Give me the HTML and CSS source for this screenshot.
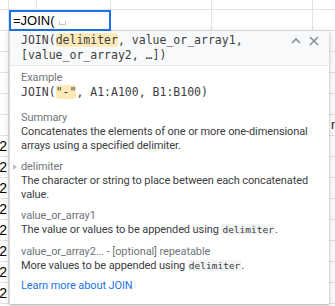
FILE: index.html
```html
<!DOCTYPE html>
<html lang="en">
<head>
    <meta charset="UTF-8">
    <meta name="viewport" content="width=device-width, initial-scale=1.0">
    <title>JOIN formula help</title>
    <link rel="stylesheet" href="styles.css">
</head>
<body>
    <div class="sheet">
        <div class="row row-top">
            <div class="cell c0"></div><div class="cell c1a"></div><div class="cell c1b"></div><div class="cell c2"></div><div class="cell c3"></div><div class="cell c4"></div>
        </div>
        <div class="row">
            <div class="cell c0"></div>
            <div class="cell c1 active">=JOIN(<span class="space-mark"></span></div>
            <div class="cell c2"></div><div class="cell c3"></div><div class="cell c4"></div>
        </div>
        <div class="row"><div class="cell c0"></div><div class="cell c1"></div><div class="cell c2"></div><div class="cell c3"></div><div class="cell c4"></div></div>
        <div class="row"><div class="cell c0"></div><div class="cell c1"></div><div class="cell c2"></div><div class="cell c3"></div><div class="cell c4"></div></div>
        <div class="row"><div class="cell c0"></div><div class="cell c1"></div><div class="cell c2"></div><div class="cell c3"></div><div class="cell c4"></div></div>
        <div class="row"><div class="cell c0"></div><div class="cell c1"></div><div class="cell c2"></div><div class="cell c3"></div><div class="cell c4"></div></div>
        <div class="row"><div class="cell c0"></div><div class="cell c1"></div><div class="cell c2"></div><div class="cell c3"></div><div class="cell c4 overflow">n</div></div>
        <div class="row"><div class="cell c0 num">2</div><div class="cell c1"></div><div class="cell c2"></div><div class="cell c3"></div><div class="cell c4"></div></div>
        <div class="row"><div class="cell c0 num">2</div><div class="cell c1"></div><div class="cell c2"></div><div class="cell c3"></div><div class="cell c4"></div></div>
        <div class="row"><div class="cell c0 num">2</div><div class="cell c1"></div><div class="cell c2"></div><div class="cell c3"></div><div class="cell c4"></div></div>
        <div class="row"><div class="cell c0 num">2</div><div class="cell c1"></div><div class="cell c2"></div><div class="cell c3"></div><div class="cell c4"></div></div>
        <div class="row"><div class="cell c0 num">2</div><div class="cell c1"></div><div class="cell c2"></div><div class="cell c3"></div><div class="cell c4"></div></div>
        <div class="row"><div class="cell c0 num">2</div><div class="cell c1"></div><div class="cell c2"></div><div class="cell c3"></div><div class="cell c4"></div></div>
        <div class="row"><div class="cell c0 num">2</div><div class="cell c1"></div><div class="cell c2"></div><div class="cell c3"></div><div class="cell c4"></div></div>
        <div class="row"><div class="cell c0 num">2</div><div class="cell c1"></div><div class="cell c2"></div><div class="cell c3"></div><div class="cell c4"></div></div>
    </div>

    <div class="formula-help">
        <div class="help-header">
            <div class="signature">JOIN(<span class="hl">delimiter</span>, value_or_array1, [value_or_array2, …])</div>
            <div class="header-icons">
                <svg width="12" height="12" viewBox="0 0 12 12"><polyline points="2,8 6,4 10,8" fill="none" stroke="#8a8f94" stroke-width="1.6"/></svg>
                <svg width="12" height="12" viewBox="0 0 12 12"><path d="M2 2 L10 10 M10 2 L2 10" stroke="#8a8f94" stroke-width="1.6"/></svg>
            </div>
        </div>
        <div class="help-body">
            <div class="section">
                <div class="label">Example</div>
                <div class="code">JOIN(<span class="hl">"-"</span>, A1:A100, B1:B100)</div>
            </div>
            <div class="section">
                <div class="label">Summary</div>
                <div class="text">Concatenates the elements of one or more one-dimensional arrays using a specified delimiter.</div>
            </div>
            <div class="arg current">
                <div class="label">delimiter</div>
                <div class="text">The character or string to place between each concatenated value.</div>
            </div>
            <div class="arg">
                <div class="label">value_or_array1</div>
                <div class="text">The value or values to be appended using <code>delimiter</code>.</div>
            </div>
            <div class="arg">
                <div class="label">value_or_array2... - [optional] repeatable</div>
                <div class="text">More values to be appended using <code>delimiter</code>.</div>
            </div>
            <a class="learn-more" href="#">Learn more about JOIN</a>
        </div>
    </div>
</body>
</html>
```

FILE: styles.css
```css
body {
    margin: 0;
    width: 335px;
    height: 306px;
    overflow: hidden;
    background: #fff;
    font-family: 'Liberation Sans', Arial, sans-serif;
    position: relative;
}

.sheet {
    display: flex;
    flex-direction: column;
    margin-top: -11px;
}

.row {
    display: flex;
    height: 21px;
}

.cell {
    box-sizing: border-box;
    height: 21px;
    border-right: 1px solid #e2e3e3;
    border-bottom: 1px solid #e2e3e3;
    font-size: 13px;
    line-height: 20px;
    color: #000;
    white-space: nowrap;
    overflow: hidden;
}

.c0 { width: 9px; }
.c1 { width: 102px; padding-left: 4px; }
.c1a { width: 28px; }
.c1b { width: 74px; }
.c2 { width: 101px; }
.c3 { width: 101px; }
.c4 { flex: 1; border-right: none; }

.num {
    text-align: right;
    padding-right: 1px;
    font-size: 14px;
    overflow: visible;
    direction: rtl;
}

.overflow {
    padding-left: 18px;
    color: #222;
}

.active {
    border: none;
    box-shadow: inset 0 0 0 2px #1a73e8;
    position: relative;
    z-index: 1;
    padding-top: 1px;
}

.space-mark {
    display: inline-block;
    width: 5px;
    height: 3px;
    margin-left: 4px;
    border: 1px solid #c4c7c5;
    border-top: none;
}

.formula-help {
    position: absolute;
    left: 10px;
    top: 31px;
    width: 319px;
    background: #fff;
    box-shadow: 0 1px 2px rgba(60, 64, 67, 0.3), 0 2px 6px 2px rgba(60, 64, 67, 0.15);
    z-index: 2;
}

.help-header {
    display: flex;
    justify-content: space-between;
    background: #f8f9fa;
    border-bottom: 1px solid #e8eaed;
    padding: 2px 9px 2px 11px;
}

.signature {
    font-family: 'DejaVu Sans Mono', 'Liberation Mono', monospace;
    font-size: 11.5px;
    line-height: 15px;
    color: #3c4043;
    width: 250px;
}

.hl {
    background: #fde9b5;
    border-radius: 3px;
}

.header-icons {
    display: flex;
    gap: 6px;
    padding-top: 2px;
}

.help-body {
    padding: 5px 6px 11px 11px;
    font-family: Roboto, Arial, sans-serif;
    font-size: 11px;
    letter-spacing: -0.1px;
    line-height: 14px;
    color: #3c4043;
}

.label {
    color: #70757a;
}

.code {
    font-family: 'DejaVu Sans Mono', 'Liberation Mono', monospace;
    font-size: 11.5px;
    letter-spacing: 0;
    line-height: 14px;
    color: #3c4043;
}

.section + .section {
    margin-top: 12px;
}

.arg {
    margin-top: 7px;
    position: relative;
}

.arg + .arg + .arg {
    margin-top: 8px;
}

.current .label::before {
    content: '';
    position: absolute;
    left: -8px;
    top: 4px;
    border-left: 4px solid #bdc1c6;
    border-top: 3px solid transparent;
    border-bottom: 3px solid transparent;
}

code {
    font-family: 'DejaVu Sans Mono', 'Liberation Mono', monospace;
    font-size: 9.5px;
    letter-spacing: 0;
    background: #f1f3f4;
    padding: 0 1px;
}

.learn-more {
    display: block;
    margin-top: 6px;
    color: #1a73e8;
    text-decoration: none;
}
```
